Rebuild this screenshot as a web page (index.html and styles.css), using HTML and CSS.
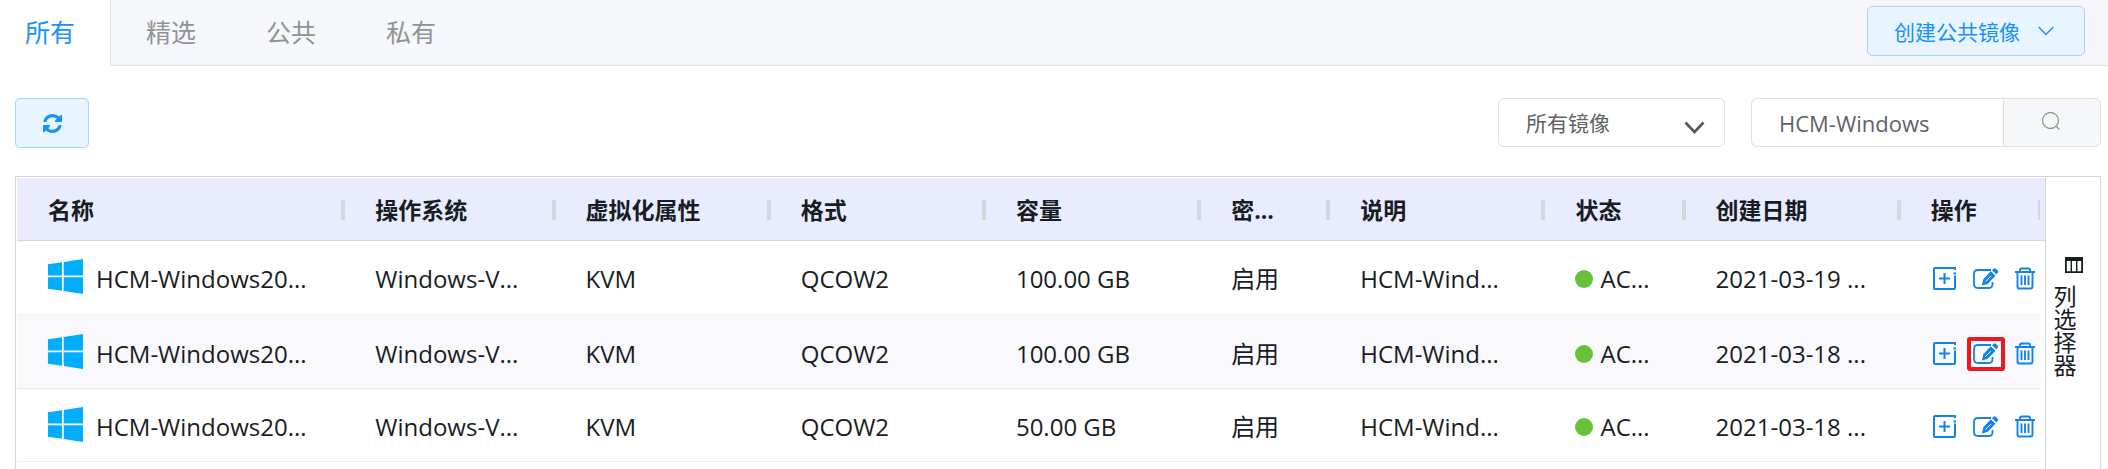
FILE: index.html
```
<!DOCTYPE html>
<html lang="zh-CN">
<head>
<meta charset="utf-8">
<title>镜像</title>
<link rel="stylesheet" href="styles.css">
</head>
<body>
<svg class="sprite" aria-hidden="true">
  <symbol id="win" viewBox="0 0 35 35"><path fill="#00adff" d="M0 5.2 14 3.2V16.5H0ZM15.7 2.9 35 0V16.5H15.7ZM0 18.2H14V31.8L0 29.8ZM15.7 18.2H35V35L15.7 32.1Z"/></symbol>
  <symbol id="plus" viewBox="0 0 24 24"><path fill="none" stroke="currentColor" stroke-width="2" d="M22 3V1H2Q1 1 1 2V21Q1 22 2 22H21Q22 22 22 21V8.500M20.500 6.500H23M11.500 6V17M6 11.500H17"/></symbol>
  <symbol id="edit" viewBox="0 0 26 22"><path fill="none" stroke="currentColor" stroke-width="1.8" d="M18 2H5Q1 2 1 6V16Q1 20 5 20H16Q19.500 20 19.500 16V14"/><path fill="currentColor" d="M17.800 3.300 22.500 7.800 14.500 15.900 8.800 17.500 10.300 11.200ZM19 2.300 21 .4Q21.700-.1 22.500 .6L24.900 2.800Q25.500 3.500 25 4.200L23.500 6.600Z"/><path stroke="#fff" stroke-width=".9" d="M12.500 13.500 18 8"/></symbol>
  <symbol id="trash" viewBox="0 0 20 23"><path fill="none" stroke="currentColor" stroke-width="1.900" d="M0 5H20M5 5V3Q5 1.500 6.500 1.500H13.500Q15 1.500 15 3V5M2.500 6V19.500Q2.500 21.500 4.500 21.500H15.500Q17.500 21.500 17.500 19.500V6M6.500 8.500V18M10 8.500V18M13.500 8.500V18"/></symbol>
</svg>

<header class="topbar">
  <nav class="tabs">
    <a class="tab active" href="#all">所有</a>
    <a class="tab" href="#featured">精选</a>
    <a class="tab" href="#public">公共</a>
    <a class="tab" href="#private">私有</a>
  </nav>
  <button class="btn create" type="button">创建公共镜像
    <svg width="16" height="10" viewBox="0 0 16 10"><path fill="none" stroke="currentColor" stroke-width="1.400" d="M.7 1 8 8.500 15.300 1"/></svg>
  </button>
</header>

<main class="content">
  <div class="toolbar">
    <button class="btn refresh" type="button" aria-label="刷新">
      <svg width="19" height="19" viewBox="0 0 1536 1536"><path fill="currentColor" d="M1511 928q0 5-1 7-64 268-268 434.500T764 1536q-146 0-282.500-55T238 1324l-129 129q-19 19-45 19t-45-19-19-45V960q0-26 19-45t45-19h448q26 0 45 19t19 45-19 45l-137 137q71 66 161 102t187 36q134 0 250-65t186-179q11-17 53-117 8-23 30-23h192q13 0 22.500 9.500t9.500 22.500zm25-800v448q0 26-19 45t-45 19h-448q-26 0-45-19t-19-45 19-45l138-138Q969 256 768 256q-134 0-250 65T332 500q-11 17-53 117-8 23-30 23H50q-13 0-22.500-9.500T18 608v-7q65-268 270-434.500T768 0q146 0 284 55.500T1297 212l130-129q19-19 45-19t45 19 19 45z"/></svg>
    </button>
    <div class="filters">
      <div class="select-wrap">
        <select class="select" aria-label="镜像类型"><option>所有镜像</option></select>
        <svg class="caret" width="21" height="13" viewBox="0 0 21 13"><path fill="none" stroke="currentColor" stroke-width="2.600" d="M1.500 1.500 10.500 11 19.500 1.500"/></svg>
      </div>
      <form class="search">
        <input class="search-input" type="text" value="HCM-Windows" aria-label="搜索">
        <button class="search-btn" type="button" aria-label="搜索">
          <svg width="20" height="20" viewBox="0 0 20 20"><g fill="none" stroke="currentColor" stroke-width="1.300"><circle cx="9.500" cy="9.500" r="8"/><path d="M14.800 15 18.500 18.500"/></g></svg>
        </button>
      </form>
    </div>
  </div>

  <section class="grid">
    <div class="grid-main">
      <table class="table">
        <colgroup>
          <col class="c-name"><col class="c-os"><col class="c-wide"><col class="c-wide"><col class="c-wide"><col class="c-key"><col class="c-wide"><col class="c-state"><col class="c-wide"><col class="c-ops">
        </colgroup>
        <thead>
          <tr><th><span>名称</span></th><th><span>操作系统</span></th><th><span>虚拟化属性</span></th><th><span>格式</span></th><th><span>容量</span></th><th><span>密...</span></th><th><span>说明</span></th><th><span>状态</span></th><th><span>创建日期</span></th><th><span>操作</span></th></tr>
        </thead>
        <tbody>
          <tr>
            <td><div class="name"><svg class="win"><use href="#win"/></svg>HCM-Windows20...</div></td><td>Windows-V...</td><td>KVM</td><td>QCOW2</td><td>100.00 GB</td><td>启用</td><td>HCM-Wind...</td><td><div class="state"><i class="dot"></i>AC...</div></td><td>2021-03-19 ...</td>
            <td><div class="ops"><button type="button" aria-label="创建"><svg class="i-plus"><use href="#plus"/></svg></button><button class="edit" type="button" aria-label="编辑"><svg class="i-edit"><use href="#edit"/></svg></button><button type="button" aria-label="删除"><svg class="i-trash"><use href="#trash"/></svg></button></div></td>
          </tr>
          <tr>
            <td><div class="name"><svg class="win"><use href="#win"/></svg>HCM-Windows20...</div></td><td>Windows-V...</td><td>KVM</td><td>QCOW2</td><td>100.00 GB</td><td>启用</td><td>HCM-Wind...</td><td><div class="state"><i class="dot"></i>AC...</div></td><td>2021-03-18 ...</td>
            <td><div class="ops"><button type="button" aria-label="创建"><svg class="i-plus"><use href="#plus"/></svg></button><button class="edit marked" type="button" aria-label="编辑"><svg class="i-edit"><use href="#edit"/></svg></button><button type="button" aria-label="删除"><svg class="i-trash"><use href="#trash"/></svg></button></div></td>
          </tr>
          <tr>
            <td><div class="name"><svg class="win"><use href="#win"/></svg>HCM-Windows20...</div></td><td>Windows-V...</td><td>KVM</td><td>QCOW2</td><td>50.00 GB</td><td>启用</td><td>HCM-Wind...</td><td><div class="state"><i class="dot"></i>AC...</div></td><td>2021-03-18 ...</td>
            <td><div class="ops"><button type="button" aria-label="创建"><svg class="i-plus"><use href="#plus"/></svg></button><button class="edit" type="button" aria-label="编辑"><svg class="i-edit"><use href="#edit"/></svg></button><button type="button" aria-label="删除"><svg class="i-trash"><use href="#trash"/></svg></button></div></td>
          </tr>
        </tbody>
      </table>
    </div>
    <aside class="side">
      <button class="side-btn" type="button">
        <svg width="18" height="16" viewBox="0 0 18 16"><path fill="currentColor" fill-rule="evenodd" d="M0 0H18V16H0ZM1.800 4V14.300H5.600V4ZM7 4V14.300H11V4ZM12.400 4V14.300H16.200V4Z"/></svg>
        <span>列选择器</span>
      </button>
    </aside>
  </section>
</main>
</body>
</html>
```
FILE: styles.css
```
* { box-sizing: border-box; }

body {
  margin: 0;
  background: #fff;
  color: #181d1f;
  font-family: "Open Sans", "Noto Sans CJK SC", sans-serif;
  font-size: 24px;
}

button, input, select { font-family: inherit; margin: 0; }
button { cursor: pointer; }
svg { display: block; flex: none; }
.sprite { display: none; }

.topbar {
  display: flex;
  justify-content: space-between;
  height: 66px;
  padding-right: 23px;
  background: linear-gradient(#dfe4ed, #dfe4ed) bottom / 100% 1px no-repeat #f5f7fb;
}
.tabs { display: flex; }
.tab {
  display: flex;
  align-items: center;
  padding: 0 35px 2px;
  color: #909399;
  font-size: 25px;
  line-height: 36px;
  text-decoration: none;
}
.tab.active {
  padding-left: 25px;
  background: #fff;
  border-right: 1px solid #dcdfe6;
  color: #1890ff;
}

.btn {
  display: flex;
  align-items: center;
  justify-content: center;
  height: 50px;
  border: 1px solid #a3d3ff;
  border-radius: 5px;
  background: #e8f4ff;
  color: #1890ff;
}
.create {
  gap: 18px;
  margin-top: 6px;
  padding: 0 30px 0 26px;
  font-size: 21px;
}
.refresh { width: 74px; padding: 0; }

.content { padding: 32px 7px 0 15px; }
.toolbar { display: flex; justify-content: space-between; }
.filters { display: flex; gap: 26px; }
.select-wrap { position: relative; width: 227px; height: 49px; }
.select {
  width: 100%;
  height: 100%;
  padding: 0 28px 0 27px;
  border: 1px solid #dcdfe6;
  border-radius: 6px;
  appearance: none;
  background: #fff;
  color: #606266;
  font-size: 21px;
}
.caret {
  position: absolute;
  top: 23px;
  right: 20px;
  color: #54575d;
  pointer-events: none;
}
.search { display: flex; height: 49px; }
.search-input {
  width: 252px;
  padding: 0 27px;
  border: 1px solid #dcdfe6;
  border-right: 0;
  border-radius: 6px 0 0 6px;
  color: #606266;
  font-size: 22px;
  outline: 0;
}
.search-btn {
  display: flex;
  justify-content: center;
  width: 98px;
  padding: 12px 2px 0 0;
  border: 1px solid #dcdfe6;
  border-radius: 0 6px 6px 0;
  background: #f5f7fa;
  color: #909399;
}

.grid {
  display: flex;
  min-height: 293px;
  margin-top: 28px;
  padding: 1px 0 0 1px;
  border: 1px solid #ced4e0;
  border-bottom: 0;
}
.grid-main {
  flex: 1;
  min-width: 0;
  padding-right: 5px;
  background: linear-gradient(#e9ecff 62px, #ced4e0 62px, #ced4e0 63px, #fff 63px);
}
.table {
  width: 100%;
  table-layout: fixed;
  border-spacing: 0;
}
.c-name { width: 328px; }
.c-os { width: 210px; }
.c-wide { width: 215px; }
.c-key { width: 129px; }
.c-state { width: 140px; }
.c-ops { width: 139px; }

th, td {
  padding: 0 0 0 30px;
  text-align: left;
  white-space: nowrap;
}
th {
  height: 63px;
  padding-top: 1px;
  font-size: 23px;
  font-weight: 700;
}
th span {
  display: block;
  line-height: 20px;
  border-right: 4px solid #d3d8df;
}
th:last-child span { border-right-width: 2px; }
td {
  height: 73px;
  padding-top: 3px;
  border-bottom: 1px solid #e8ebf3;
  line-height: 34px;
}
td:first-child, th:first-child { padding-left: 31px; }
tbody tr:first-child td { height: 75px; padding-top: 2px; border-bottom: 2px solid #f3f3f8; }
tbody tr:nth-child(even) td { background: #f8f8fd; }

.name { display: flex; gap: 13px; }
.win { width: 35px; height: 35px; margin-top: -3px; }
.state { display: flex; align-items: center; gap: 7px; }
.dot {
  width: 18px;
  height: 18px;
  border-radius: 50%;
  background: #67c23a;
}
.ops {
  display: flex;
  align-items: center;
  gap: 10px;
  padding-left: 2px;
  color: #1283ee;
}
.ops button {
  display: flex;
  padding: 0;
  border: 0;
  background: none;
  color: inherit;
}
.ops .edit {
  align-items: center;
  justify-content: center;
  width: 38px;
  height: 34px;
  border: 4px solid transparent;
  border-radius: 3px;
}
.ops .marked { border-color: #f01820; background: #fff; }
.i-plus { width: 24px; height: 24px; }
.i-edit { width: 26px; height: 22px; }
.i-trash { width: 20px; height: 23px; }

.side {
  width: 55px;
  border-left: 1px solid #ced4e0;
}
.side-btn {
  display: flex;
  flex-direction: column;
  align-items: center;
  gap: 12px;
  width: 100%;
  padding: 79px 0 0;
  border: 0;
  background: none;
  color: #181d1f;
  font-size: 23px;
}
.side-btn svg { margin-left: 2px; }
.side-btn span {
  margin-right: 18px;
  line-height: 24px;
  writing-mode: vertical-rl;
}
```
